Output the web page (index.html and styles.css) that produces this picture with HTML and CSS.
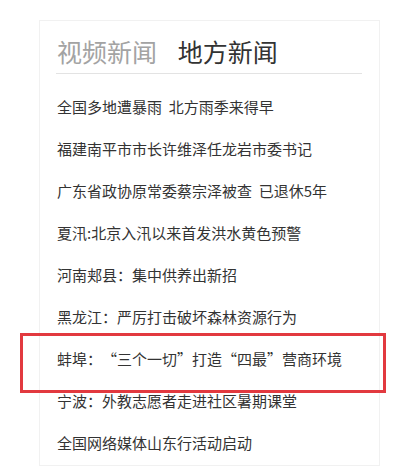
FILE: index.html
```html
<!DOCTYPE html>
<html lang="zh-CN">
<head>
    <meta charset="UTF-8">
    <meta name="viewport" content="width=device-width, initial-scale=1.0">
    <title>地方新闻</title>
    <link rel="stylesheet" href="styles.css">
</head>
<body>
    <div class="news-box">
        <div class="tabs">
            <span class="tab">视频新闻</span>
            <span class="tab active">地方新闻</span>
        </div>
        <ul class="news-list">
            <li>全国多地遭暴雨&nbsp;&nbsp;北方雨季来得早</li>
            <li>福建南平市市长许维泽任龙岩市委书记</li>
            <li>广东省政协原常委蔡宗泽被查&nbsp;&nbsp;已退休5年</li>
            <li>夏汛:北京入汛以来首发洪水黄色预警</li>
            <li>河南郏县：集中供养出新招</li>
            <li>黑龙江：严厉打击破坏森林资源行为</li>
            <li>蚌埠：<span class="lq">“</span>三个一切<span class="rq">”</span>打造<span class="lq">“</span>四最<span class="rq">”</span>营商环境</li>
            <li>宁波：外教志愿者走进社区暑期课堂</li>
            <li>全国网络媒体山东行活动启动</li>
        </ul>
    </div>

    <!-- highlight frame -->
    <div class="highlight"></div>
</body>
</html>
```

FILE: styles.css
```css
body {
    margin: 0;
    font-family: "Noto Sans CJK SC", "Liberation Sans", sans-serif;
    color: #333;
    background: #fff;
}
.news-box {
    width: 306px;
    margin: 20px 0 0 39px;
    padding: 0 17px 0 16px;
    border: 1px solid #f1f1f1;
    height: 444px;
}
.tabs {
    padding: 16px 0 8px 1px;
    line-height: 28px;
    font-size: 25px;
    border-bottom: 1px solid #e3e3e3;
    white-space: nowrap;
}
.tab {
    color: #a3a3a3;
    margin-right: 15px;
}
.tab.active {
    color: #333;
}
.news-list {
    list-style: none;
    margin: 12px 0 0;
    padding: 0 0 0 1px;
}
.news-list li {
    font-size: 15px;
    line-height: 42px;
    height: 42px;
    white-space: nowrap;
}
.lq, .rq {
    display: inline-block;
    width: 1em;
}
.lq {
    text-align: right;
}
.rq {
    text-align: left;
}
.highlight {
    position: absolute;
    left: 20px;
    top: 333px;
    width: 360px;
    height: 54px;
    border: 3px solid #e2393f;
}
```
